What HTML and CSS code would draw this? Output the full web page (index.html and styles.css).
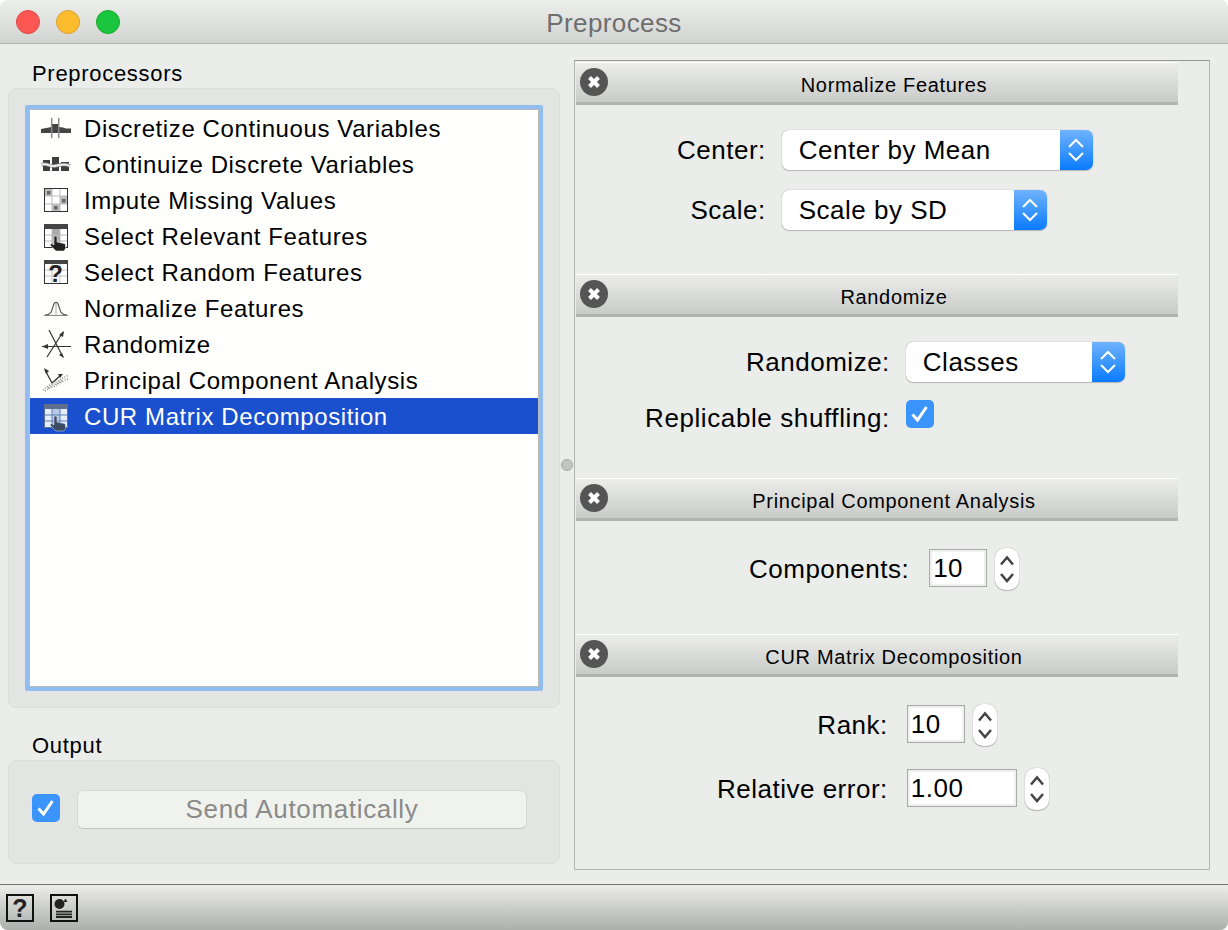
FILE: index.html
```html
<!DOCTYPE html>
<html lang="en">
<head>
    <meta charset="UTF-8">
    <title>Preprocess</title>
    <link rel="stylesheet" href="styles.css">
</head>
<body>
<div class="window">
    <div class="titlebar">
        <div class="lights">
            <span class="light red"></span>
            <span class="light yellow"></span>
            <span class="light green"></span>
        </div>
        <div class="title">Preprocess</div>
    </div>

    <div class="main">
        <div class="left">
            <div class="group-label">Preprocessors</div>
            <div class="group group-list">
                <ul class="list">
                    <li>
                        <svg class="ico" viewBox="0 0 30 30"><path d="M0 15l8-1.500 2-.5v6H0zM11 10h6.500v9H11zM18 13l4 .5 3 1h5V19H18z" fill="#444"/><path d="M10.700 4v20M17.700 4v20" stroke="#8a8a8a" stroke-width="1.500" fill="none"/></svg>
                        Discretize Continuous Variables
                    </li>
                    <li>
                        <svg class="ico" viewBox="0 0 30 30"><path d="M2 10h7v11H2zM11 7h7v14h-7zM20 12h8v9h-8z" fill="#3e3e3e"/><path d="M0 15c5-3 9 2 14 1s10-3 15 0" stroke="#8c8c8c" stroke-width="3.500" fill="none"/><path d="M0 15c5-3 9 2 14 1s10-3 15 0" stroke="#f4f4f4" stroke-width="1.800" fill="none"/></svg>
                        Continuize Discrete Variables
                    </li>
                    <li>
                        <svg class="ico" viewBox="0 0 30 30"><rect x="3.500" y="2.500" width="23" height="23" fill="#fff" stroke="#333"/><path d="M4 10h22M4 18h22M11 3v22M19 3v22" stroke="#bbb" fill="none"/><path d="M4 3h7v7H4zM19 10h7v8h-7zM11 18h8v7h-8z" fill="#bdbdbd"/><path d="M6 5h3.500v3.500H6zM21 13h3.500v3.500H21zM13 20h3.500v3.500H13z" fill="#666"/></svg>
                        Impute Missing Values
                    </li>
                    <li>
                        <svg class="ico" viewBox="0 0 30 30"><rect x="3.500" y="2.500" width="23" height="23" fill="#fff" stroke="#333"/><path d="M3 2h24v5H3z" fill="#444"/><path d="M11 7h8v18h-8z" fill="#aaa"/><path d="M4 13h22M4 19h22M11 7v18M19 7v18" stroke="#bbb" fill="none"/><path d="M13 15.500a1.500 1.500 0 0 1 3 0V20l7 1.500c1 .3 1.500 1 1.500 2v3L23 29h-8l-6-6 1.500-1.500L13 23z" fill="#222" stroke="#fff" stroke-width=".5"/></svg>
                        Select Relevant Features
                    </li>
                    <li>
                        <svg class="ico" viewBox="0 0 30 30"><rect x="3.500" y="2.500" width="23" height="23" fill="#fff" stroke="#333"/><path d="M3 2h24v4H3z" fill="#444"/><path d="M4 12h22M4 18h22M11 6v19M19 6v19" stroke="#c4c4c4" fill="none"/><text x="15" y="24" class="ico-q">?</text></svg>
                        Select Random Features
                    </li>
                    <li>
                        <svg class="ico" viewBox="0 0 30 30"><path d="M3 21.500h24" stroke="#888" fill="none"/><path d="M4 21c6 0 6.500-3 8.500-10 1-3.500 4-3.500 5 0 2 7 2.500 10 8.500 10" stroke="#555" stroke-width="1.200" fill="none"/><path d="M15 9v12" stroke="#aaa" fill="none"/></svg>
                        Normalize Features
                    </li>
                    <li>
                        <svg class="ico" viewBox="0 0 30 30"><path d="M1 16.500h29M8 0l14 27M22 2L6 27" stroke="#333" stroke-width="1.200" fill="none"/><path d="M1 16.500l6-2.500v5zM23 28l-5-3 3-2zM23 1l-1 6-4-2z" fill="#333"/></svg>
                        Randomize
                    </li>
                    <li>
                        <svg class="ico" viewBox="0 0 30 30"><path d="M4 4l7 13M11 17l8-7" stroke="#333" stroke-width="1.300" fill="none"/><path d="M3 2l5 3-3 3zM22 8l-5 0 2 4z" fill="#333"/><path d="M2 24l5-4 5-3 5-2 5-3 6-3M4 25l5-3 5-2 5-3 5-3 3-1M7 22l5-3 5-2 5-3" stroke="#888" stroke-width="1.500" stroke-dasharray="1 1.500" fill="none"/></svg>
                        Principal Component Analysis
                    </li>
                    <li class="selected">
                        <svg class="ico" viewBox="0 0 30 30"><path d="M3 2h24v24H3z" fill="#5f6f8f"/><path d="M4 7h22v18H4z" fill="#e4edf8"/><path d="M11 7h8v18h-8z" fill="#b7cbe6"/><path d="M4 13h22M4 19h22M11 7v18M19 7v18" stroke="#5f7fb5" fill="none"/><path d="M13 15.500a1.500 1.500 0 0 1 3 0V20l7 1.500c1 .3 1.500 1 1.500 2v3L23 29h-8l-6-6 1.500-1.500L13 23z" fill="#3c4a63" stroke="#cfe0f5" stroke-width=".5"/></svg>
                        CUR Matrix Decomposition
                    </li>
                </ul>
            </div>

            <div class="group-label group-label-output">Output</div>
            <div class="group group-output">
                <span class="check"><svg viewBox="0 0 28 28"><path d="M6.500 14.500l5 5.500 9-13" stroke="#fff" stroke-width="3" fill="none"/></svg></span>
                <button class="send">Send Automatically</button>
            </div>
        </div>

        <div class="splitter"><span class="handle"></span></div>

        <div class="panel">
            <section class="box box-norm">
                <div class="box-head">
                    <svg class="close" viewBox="0 0 28 28"><circle cx="14" cy="14" r="14" fill="#555"/><path d="M9.500 9.500l9 9M18.500 9.500l-9 9" stroke="#fff" stroke-width="4" fill="none"/></svg>
                    Normalize Features
                </div>
                <div class="form form-norm">
                    <label>Center:</label>
                    <div class="select select-center">Center by Mean<span class="select-btn"><svg viewBox="0 0 20 28"><path d="M3 11l7-7 7 7M3 17l7 7 7-7" stroke="#fff" stroke-width="2" fill="none"/></svg></span></div>
                    <label>Scale:</label>
                    <div class="select select-scale">Scale by SD<span class="select-btn"><svg viewBox="0 0 20 28"><path d="M3 11l7-7 7 7M3 17l7 7 7-7" stroke="#fff" stroke-width="2" fill="none"/></svg></span></div>
                </div>
            </section>

            <section class="box box-rand">
                <div class="box-head">
                    <svg class="close" viewBox="0 0 28 28"><circle cx="14" cy="14" r="14" fill="#555"/><path d="M9.500 9.500l9 9M18.500 9.500l-9 9" stroke="#fff" stroke-width="4" fill="none"/></svg>
                    Randomize
                </div>
                <div class="form form-rand">
                    <label>Randomize:</label>
                    <div class="select select-classes">Classes<span class="select-btn"><svg viewBox="0 0 20 28"><path d="M3 11l7-7 7 7M3 17l7 7 7-7" stroke="#fff" stroke-width="2" fill="none"/></svg></span></div>
                    <label class="label-low">Replicable shuffling:</label>
                    <span class="check"><svg viewBox="0 0 28 28"><path d="M6.500 14.500l5 5.500 9-13" stroke="#fff" stroke-width="3" fill="none"/></svg></span>
                </div>
            </section>

            <section class="box box-pca">
                <div class="box-head">
                    <svg class="close" viewBox="0 0 28 28"><circle cx="14" cy="14" r="14" fill="#555"/><path d="M9.500 9.500l9 9M18.500 9.500l-9 9" stroke="#fff" stroke-width="4" fill="none"/></svg>
                    Principal Component Analysis
                </div>
                <div class="form form-pca">
                    <label>Components:</label>
                    <div class="spin">
                        <input class="spin-input w58" value="10">
                        <span class="stepper"><svg viewBox="0 0 24 42"><path d="M6 16.500l6-7 6 7M6 26l6 7 6-7" stroke="#444" stroke-width="2.500" fill="none"/></svg></span>
                    </div>
                </div>
            </section>

            <section class="box box-cur">
                <div class="box-head">
                    <svg class="close" viewBox="0 0 28 28"><circle cx="14" cy="14" r="14" fill="#555"/><path d="M9.500 9.500l9 9M18.500 9.500l-9 9" stroke="#fff" stroke-width="4" fill="none"/></svg>
                    CUR Matrix Decomposition
                </div>
                <div class="form form-cur">
                    <label>Rank:</label>
                    <div class="spin">
                        <input class="spin-input w58" value="10">
                        <span class="stepper"><svg viewBox="0 0 24 42"><path d="M6 16.500l6-7 6 7M6 26l6 7 6-7" stroke="#444" stroke-width="2.500" fill="none"/></svg></span>
                    </div>
                    <label>Relative error:</label>
                    <div class="spin">
                        <input class="spin-input w110" value="1.00">
                        <span class="stepper"><svg viewBox="0 0 24 42"><path d="M6 16.500l6-7 6 7M6 26l6 7 6-7" stroke="#444" stroke-width="2.500" fill="none"/></svg></span>
                    </div>
                </div>
            </section>
        </div>
    </div>

    <div class="footer">
        <span class="foot-btn foot-help">?</span>
        <span class="foot-btn"><svg viewBox="0 0 24 24"><circle cx="7.500" cy="8" r="5" fill="#222"/><path d="M13.500 2.500l2 3.500h-4z" fill="#222"/><path d="M4 15.700h16M4 18.400h16M4 21h16" stroke="#222" stroke-width="1.800" fill="none"/></svg></span>
    </div>
</div>
</body>
</html>
```

FILE: styles.css
```css
*{margin: 0;padding: 0;box-sizing: border-box;}
html,body{width: 1228px;height: 930px;overflow: hidden;background: #fff;}
body{font-family: "Liberation Sans",Arial,sans-serif;font-size: 26px;letter-spacing: .5px;color: #000;}
ul,li{list-style: none;}

.window{width: 1228px;height: 930px;display: flex;flex-direction: column;background: #ebedeb;border-radius: 8px;overflow: hidden;}

/* title bar */
.titlebar{height: 44px;flex: none;display: flex;align-items: center;position: relative;background: linear-gradient(#eceeec,#d2d4d1);border-bottom: 1px solid #b3b5b2;}
.lights{display: flex;gap: 16px;padding-left: 16px;}
.light{width: 24px;height: 24px;border-radius: 50%;}
.light.red{background: #fc5753;border: 1px solid #df4744;}
.light.yellow{background: #fdbc2e;border: 1px solid #de9f34;}
.light.green{background: #1bc63f;border: 1px solid #1aab29;}
.title{position: absolute;left: 0;right: 0;top: 0;text-align: center;color: #6e6e6e;line-height: 46px;letter-spacing: .4px;}

/* main area */
.main{height: 840px;flex: none;display: flex;padding: 16px 18px 14px 8px;}
.left{width: 552px;flex: none;display: flex;flex-direction: column;}
.group-label{height: 28px;padding-left: 24px;font-size: 22px;letter-spacing: .7px;line-height: 27px;}
.group-label-output{margin-top: 24px;}
.group{background: #e3e5e2;border: 1px solid #dcdedb;border-radius: 8px;}
.group-list{height: 620px;padding: 16px;}
.group-output{height: 104px;display: flex;align-items: flex-start;padding: 33px 0 0 23px;}

.list{height: 586px;background: #fffffd;border: 4px solid #92bdf1;border-radius: 2px;padding: 2px 1px 0;box-shadow: inset 0 0 0 1px #b9bbb9;}
.list li{height: 36px;display: flex;align-items: center;gap: 13px;padding-left: 11px;white-space: nowrap;font-size: 24px;letter-spacing: .6px;}
.list li.selected{height: 36px;margin-top: -1px;padding-top: 2px;background: #1a50cd;color: #fff;}
.ico{width: 30px;height: 30px;flex: none;}
.ico-q{font: bold 24px "Liberation Sans",sans-serif;fill: #222;text-anchor: middle;}

.check{width: 28px;height: 28px;flex: none;background: #3a94fb;border-radius: 5px;display: block;}
.check svg{width: 28px;height: 28px;display: block;}
.send{width: 450px;height: 39px;margin-left: 17px;margin-top: -4px;background: #f0f2ee;border: 1px solid #d6d8d5;border-bottom-color: #c2c4c1;border-radius: 6px;font: 26px "Liberation Sans",Arial,sans-serif;letter-spacing: .65px;color: #8a8a8a;}

.splitter{width: 14px;flex: none;display: flex;align-items: center;justify-content: center;}
.handle{width: 12px;height: 12px;border-radius: 50%;background: #c3c5c2;border: 1px solid #a9aba8;}

/* right side */
.panel{width: 636px;flex: none;border: 1px solid #b3b5b2;border-top-color: #979997;padding: 1px 0 0 1px;}
.box{width: 602px;}
.box-norm{height: 212px;}
.box-rand{height: 204px;}
.box-pca{height: 156px;}
.box-head{height: 43px;position: relative;text-align: center;font-size: 20px;letter-spacing: .67px;line-height: 44px;padding-left: 34px;background: linear-gradient(#ecedeb,#c9cbc8);border-top: 1px solid #fff;border-bottom: 3px solid #b2b4b1;}
.close{position: absolute;left: 4px;top: 5px;width: 28px;height: 28px;}

.form{display: grid;grid-template-columns: auto auto;justify-content: start;column-gap: 16px;align-items: center;}
.form label{text-align: right;white-space: nowrap;}
.form .label-low{height: 28px;line-height: 36px;letter-spacing: .6px;}
.form-norm{padding: 25px 0 0 101px;row-gap: 20px;}
.form-rand{padding: 25px 0 0 69px;row-gap: 18px;}
.form-pca{padding: 27px 0 0 173px;column-gap: 20px;}
.form-cur{padding: 27px 0 0 141px;row-gap: 22px;column-gap: 19px;}

.select{height: 40px;position: relative;background: #fff;border-radius: 7px;line-height: 41px;padding-left: 17px;box-shadow: 0 0 1px #8b8b8b,0 1px 1px #b8b8b8;}
.select-center{width: 311px;}
.select-scale{width: 265px;}
.select-classes{width: 219px;}
.select-btn{position: absolute;right: 0;top: 0;width: 33px;height: 40px;border-radius: 0 7px 7px 0;background: linear-gradient(#6fb3fd,#0a7bff);display: flex;align-items: center;justify-content: center;}
.select-btn svg{width: 20px;height: 28px;}

.spin{display: flex;align-items: flex-start;gap: 8px;}
.spin-input{height: 38px;margin-top: 1px;border: 1px solid #a9aba8;box-shadow: inset 0 0 0 2px #f0f0f0;background: #fff;padding-left: 3px;font: 26px "Liberation Sans",Arial,sans-serif;letter-spacing: .5px;color: #000;}
.w58{width: 58px;}
.w110{width: 110px;}
.stepper{width: 24px;height: 42px;background: #fff;border-radius: 10px;box-shadow: 0 0 1px #8b8b8b,0 1px 1px #b8b8b8;}
.stepper svg{width: 24px;height: 42px;display: block;}

/* bottom bar */
.footer{height: 46px;flex: none;display: flex;gap: 16px;padding: 9px 0 0 6px;background: linear-gradient(#ecedeb,#adafad);border-top: 1px solid #6f716f;}
.foot-btn{width: 28px;height: 28px;border: 2px solid #111;display: block;}
.foot-btn svg{width: 24px;height: 24px;display: block;}
.foot-help{font-weight: bold;font-size: 25px;letter-spacing: 0;line-height: 25px;text-align: center;color: #222;}
```
